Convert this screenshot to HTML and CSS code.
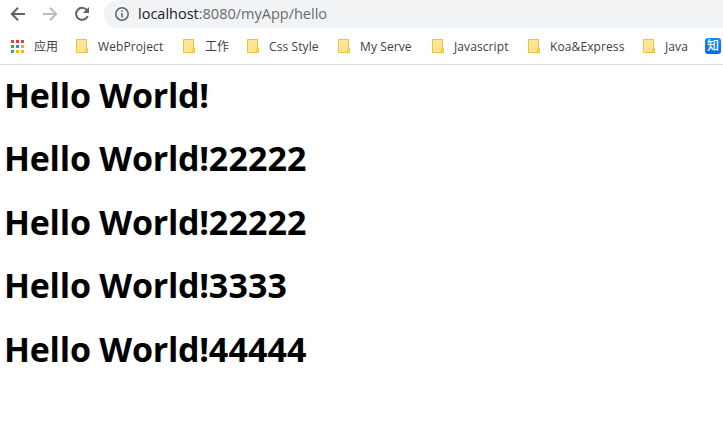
FILE: index.html
```
<!DOCTYPE html>
<html lang="zh-CN">
<head>
<meta charset="utf-8">
<title>localhost:8080/myApp/hello</title>
<link rel="stylesheet" href="styles.css">
</head>
<body>
<svg class="defs" width="0" height="0" aria-hidden="true">
  <symbol id="folder" viewBox="0 0 12 14"><path d="M.5.5h10v9h1v4H.5z" fill="#ffe694" stroke="#e8c342"/><path d="M9.5 13V9.8h2" fill="none" stroke="#e8c342"/></symbol>
</svg>
<header class="toolbar">
  <svg class="nav" viewBox="0 0 16 16"><path d="M15 8H2.3M8 1.8 1.8 8 8 14.2" stroke="#5f6368"/></svg>
  <svg class="nav" viewBox="0 0 16 16"><path d="M1 8h12.7M8 1.8 14.2 8 8 14.2" stroke="#babcbe"/></svg>
  <svg class="nav" viewBox="0 0 16 16"><path d="M13 4.4A6 6 0 1 0 13.7 10" stroke="#5f6368"/><path d="M15 1v6H9z" fill="#5f6368"/></svg>
  <div class="omnibox">
    <svg class="info" viewBox="0 0 14 14"><circle cx="7" cy="7" r="6.2" fill="none" stroke="#5f6368" stroke-width="1.5"/><path d="M7 6v4.5M7 3.3v1.5" stroke="#5f6368" stroke-width="1.5"/></svg>
    <span class="url"><b>localhost</b>:8080/myApp/hello</span>
  </div>
</header>
<nav class="bookmarks">
  <div class="item"><svg class="apps" viewBox="0 0 13 13"><path fill="#ea4335" d="M0 0h3v3H0zM5 0h3v3H5zM10 0h3v3h-3z"/><path fill="#34a853" d="M0 5h3v3H0zM0 10h3v3H0z"/><path fill="#1a8cff" d="M5 5h3v3H5z"/><path fill="#fbb305" d="M10 5h3v3h-3zM5 10h3v3H5zM10 10h3v3h-3z"/></svg><span>应用</span></div>
  <div class="item"><svg class="folder"><use href="#folder"/></svg><span>WebProject</span></div>
  <div class="item"><svg class="folder"><use href="#folder"/></svg><span>工作</span></div>
  <div class="item"><svg class="folder"><use href="#folder"/></svg><span>Css Style</span></div>
  <div class="item"><svg class="folder"><use href="#folder"/></svg><span>My Serve</span></div>
  <div class="item"><svg class="folder"><use href="#folder"/></svg><span>Javascript</span></div>
  <div class="item"><svg class="folder"><use href="#folder"/></svg><span>Koa&amp;Express</span></div>
  <div class="item"><svg class="folder"><use href="#folder"/></svg><span>Java</span></div>
  <div class="zhi">知</div>
</nav>
<main>
  <h1>Hello World!</h1>
  <h1>Hello World!<span>22222</span></h1>
  <h1>Hello World!<span>22222</span></h1>
  <h1>Hello World!<span>3333</span></h1>
  <h1>Hello World!<span>44444</span></h1>
</main>
</body>
</html>
```
FILE: styles.css
```
* { box-sizing: border-box; }
body {
  margin: 0;
  height: 426px;
  overflow: hidden;
  background: #fff;
  font-family: "Open Sans", "Noto Sans CJK SC", sans-serif;
}
.defs { display: block; height: 0; }
.toolbar {
  display: flex;
  align-items: center;
  height: 28px;
  padding-left: 10px;
}
.nav {
  width: 16px;
  height: 16px;
  margin-right: 16px;
  fill: none;
  stroke-width: 2;
}
.nav:nth-child(3) { margin-right: 14px; }
.omnibox {
  display: flex;
  align-items: center;
  flex: 1;
  height: 28px;
  padding-left: 11px;
  border-radius: 14px 0 0 14px;
  background: #f1f3f4;
}
.info { width: 14px; height: 14px; margin-right: 9px; }
.url {
  font-size: 14.5px;
  line-height: 28px;
  color: #686c70;
  white-space: nowrap;
}
.url b { font-weight: 400; color: #202124; }
.bookmarks {
  display: grid;
  grid-template-columns: 65px 107px 64px 91px 94px 96px 115px 62px 16px;
  align-items: center;
  height: 37px;
  padding-left: 11px;
  border-bottom: 1px solid #dadce0;
}
.item {
  display: flex;
  align-items: center;
  font-size: 12px;
  letter-spacing: 0.1px;
  line-height: 18px;
  color: #3c4043;
  white-space: nowrap;
}
.item span { padding-top: 2px; }
.apps { width: 13px; height: 13px; margin-right: 10px; }
.folder { width: 12px; height: 14px; margin-right: 10px; }
.zhi {
  width: 16px;
  height: 16px;
  border-radius: 3px;
  background: linear-gradient(#0a90ff, #0866ff);
  color: #fff;
  font-size: 12px;
  font-weight: 500;
  line-height: 15px;
  text-align: center;
}
main { padding: 7px 0 0 4px; }
h1 {
  margin: 0;
  height: 63.4px;
  font-size: 34px;
  line-height: 46px;
  font-weight: 700;
  letter-spacing: -0.24px;
  color: #000;
  white-space: nowrap;
}
h1 span { letter-spacing: 0.12px; }
```
